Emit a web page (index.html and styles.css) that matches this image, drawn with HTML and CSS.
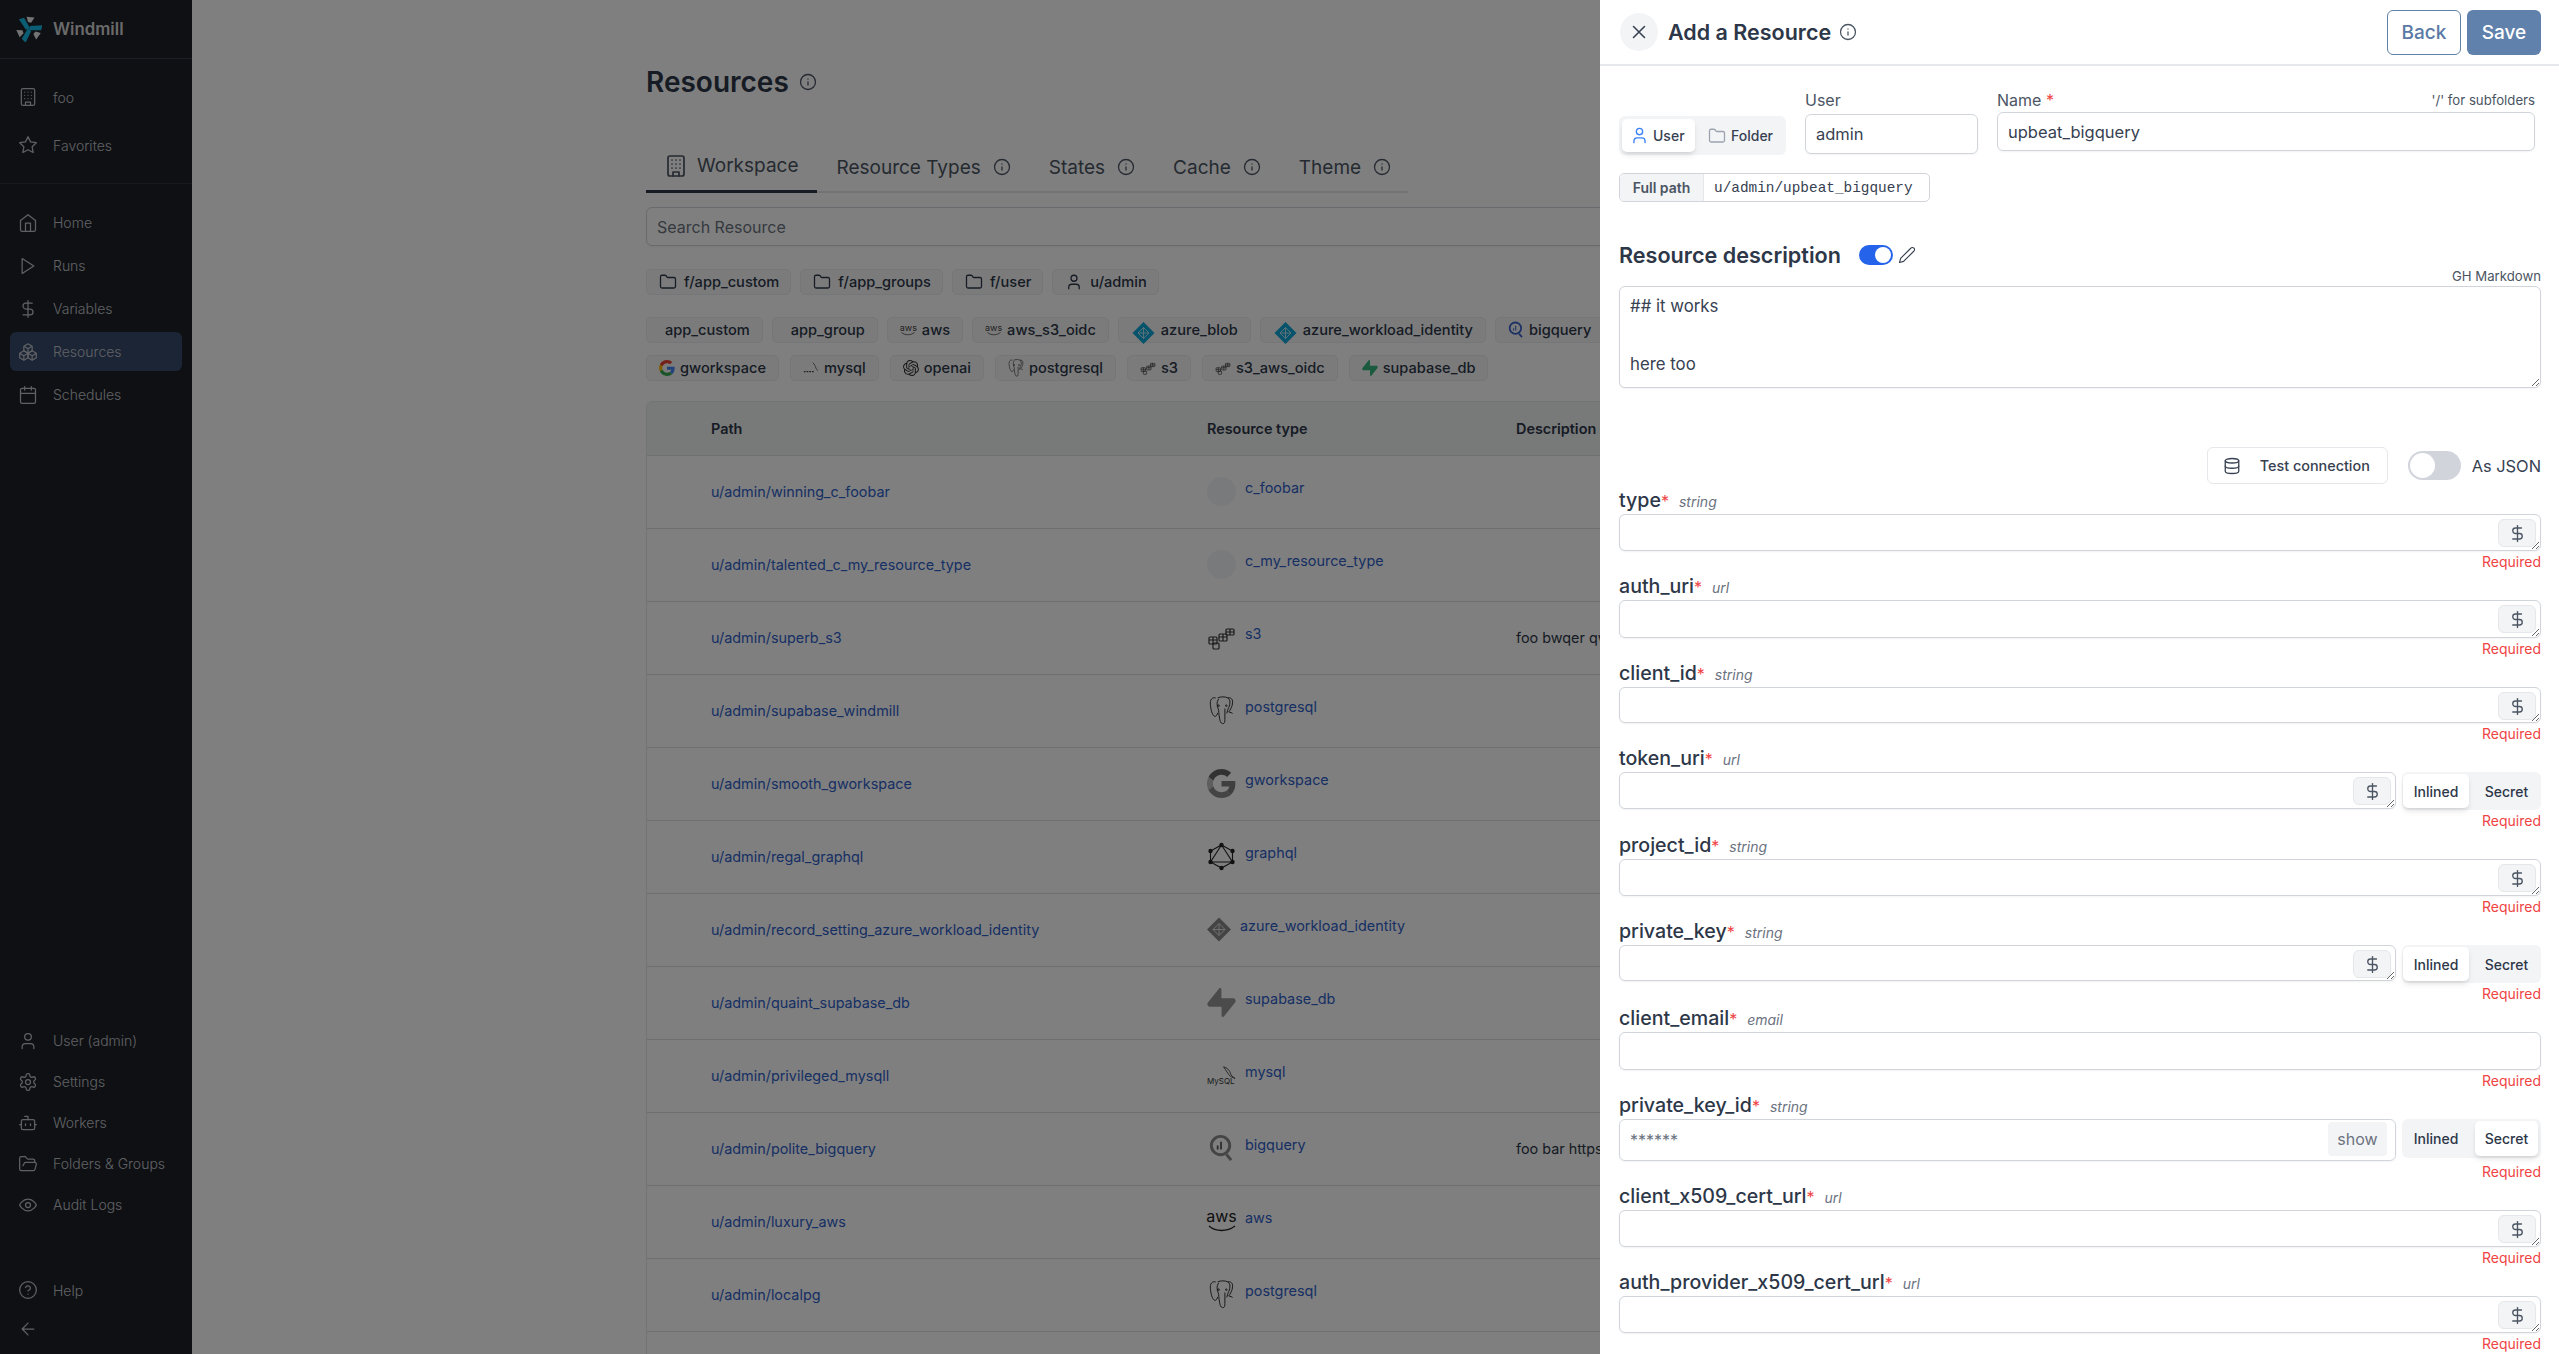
FILE: index.html
```html
<!DOCTYPE html>
<html lang="en">
<head>
<meta charset="utf-8">
<title>Windmill | Resources</title>
<link rel="stylesheet" href="styles.css">
</head>
<body>
<svg class="defs" aria-hidden="true">
  <defs>
    <symbol id="i-building" viewBox="0 0 24 24"><rect width="16" height="20" x="4" y="2" rx="2"/><path d="M9 22v-4h6v4M8 6h.01M16 6h.01M12 6h.01M12 10h.01M12 14h.01M16 10h.01M16 14h.01M8 10h.01M8 14h.01"/></symbol>
    <symbol id="i-star" viewBox="0 0 24 24"><polygon points="12 2 15.09 8.26 22 9.27 17 14.14 18.18 21.02 12 17.77 5.82 21.02 7 14.14 2 9.27 8.91 8.26 12 2"/></symbol>
    <symbol id="i-home" viewBox="0 0 24 24"><path d="m3 9 9-7 9 7v11a2 2 0 0 1-2 2H5a2 2 0 0 1-2-2z"/><polyline points="9 22 9 12 15 12 15 22"/></symbol>
    <symbol id="i-play" viewBox="0 0 24 24"><polygon points="5 3 19 12 5 21 5 3"/></symbol>
    <symbol id="i-dollar" viewBox="0 0 24 24"><line x1="12" x2="12" y1="2" y2="22"/><path d="M17 5H9.5a3.5 3.5 0 0 0 0 7h5a3.5 3.5 0 0 1 0 7H6"/></symbol>
    <symbol id="i-boxes" viewBox="0 0 24 24"><path d="M2.97 12.92A2 2 0 0 0 2 14.63v3.24a2 2 0 0 0 .97 1.71l3 1.8a2 2 0 0 0 2.06 0L12 19v-5.5l-5-3-4.03 2.42Z"/><path d="m7 16.5-4.74-2.85M7 16.5l5-3M7 16.5v5.17"/><path d="M12 13.5V19l3.97 2.38a2 2 0 0 0 2.06 0l3-1.8a2 2 0 0 0 .97-1.71v-3.24a2 2 0 0 0-.97-1.71L17 10.5l-5 3Z"/><path d="m17 16.5-5-3M17 16.5l4.74-2.85M17 16.5v5.17"/><path d="M7.97 4.42A2 2 0 0 0 7 6.13v4.37l5 3 5-3V6.13a2 2 0 0 0-.97-1.71l-3-1.8a2 2 0 0 0-2.06 0l-3 1.8Z"/><path d="M12 8 7.26 5.15M12 8l4.74-2.85M12 13.5V8"/></symbol>
    <symbol id="i-calendar" viewBox="0 0 24 24"><rect width="18" height="18" x="3" y="4" rx="2"/><line x1="16" x2="16" y1="2" y2="6"/><line x1="8" x2="8" y1="2" y2="6"/><line x1="3" x2="21" y1="10" y2="10"/></symbol>
    <symbol id="i-user" viewBox="0 0 24 24"><path d="M19 21v-2a4 4 0 0 0-4-4H9a4 4 0 0 0-4 4v2"/><circle cx="12" cy="7" r="4"/></symbol>
    <symbol id="i-settings" viewBox="0 0 24 24"><path d="M12.22 2h-.44a2 2 0 0 0-2 2v.18a2 2 0 0 1-1 1.73l-.43.25a2 2 0 0 1-2 0l-.15-.08a2 2 0 0 0-2.73.73l-.22.38a2 2 0 0 0 .73 2.73l.15.1a2 2 0 0 1 1 1.72v.51a2 2 0 0 1-1 1.74l-.15.09a2 2 0 0 0-.73 2.73l.22.38a2 2 0 0 0 2.73.73l.15-.08a2 2 0 0 1 2 0l.43.25a2 2 0 0 1 1 1.73V20a2 2 0 0 0 2 2h.44a2 2 0 0 0 2-2v-.18a2 2 0 0 1 1-1.73l.43-.25a2 2 0 0 1 2 0l.15.08a2 2 0 0 0 2.73-.73l.22-.39a2 2 0 0 0-.73-2.73l-.15-.08a2 2 0 0 1-1-1.74v-.5a2 2 0 0 1 1-1.74l.15-.09a2 2 0 0 0 .73-2.73l-.22-.38a2 2 0 0 0-2.73-.73l-.15.08a2 2 0 0 1-2 0l-.43-.25a2 2 0 0 1-1-1.73V4a2 2 0 0 0-2-2z"/><circle cx="12" cy="12" r="3"/></symbol>
    <symbol id="i-bot" viewBox="0 0 24 24"><path d="M12 8V4H8"/><rect width="16" height="12" x="4" y="8" rx="2"/><path d="M2 14h2M20 14h2M15 13v2M9 13v2"/></symbol>
    <symbol id="i-folder-open" viewBox="0 0 24 24"><path d="m6 14 1.5-2.9A2 2 0 0 1 9.24 10H20a2 2 0 0 1 1.94 2.5l-1.54 6a2 2 0 0 1-1.95 1.5H4a2 2 0 0 1-2-2V5a2 2 0 0 1 2-2h3.9a2 2 0 0 1 1.69.9l.81 1.2a2 2 0 0 0 1.67.9H18a2 2 0 0 1 2 2v2"/></symbol>
    <symbol id="i-eye" viewBox="0 0 24 24"><path d="M2 12s3-7 10-7 10 7 10 7-3 7-10 7-10-7-10-7Z"/><circle cx="12" cy="12" r="3"/></symbol>
    <symbol id="i-help" viewBox="0 0 24 24"><circle cx="12" cy="12" r="10"/><path d="M9.09 9a3 3 0 0 1 5.83 1c0 2-3 3-3 3M12 17h.01"/></symbol>
    <symbol id="i-back" viewBox="0 0 24 24"><path d="m12 19-7-7 7-7M19 12H5"/></symbol>
    <symbol id="i-x" viewBox="0 0 24 24"><path d="M18 6 6 18M6 6l12 12"/></symbol>
    <symbol id="i-info" viewBox="0 0 24 24"><circle cx="12" cy="12" r="10"/><path d="M12 16v-4M12 8h.01"/></symbol>
    <symbol id="i-folder" viewBox="0 0 24 24"><path d="M20 20a2 2 0 0 0 2-2V8a2 2 0 0 0-2-2h-7.9a2 2 0 0 1-1.69-.9L9.6 3.9A2 2 0 0 0 7.93 3H4a2 2 0 0 0-2 2v13a2 2 0 0 0 2 2Z"/></symbol>
    <symbol id="i-pen" viewBox="0 0 24 24"><path d="M17 3a2.85 2.83 0 1 1 4 4L7.5 20.5 2 22l1.5-5.5Z"/></symbol>
    <symbol id="i-db" viewBox="0 0 24 24"><ellipse cx="12" cy="5" rx="9" ry="3"/><path d="M3 5V19A9 3 0 0 0 21 19V5"/><path d="M3 12A9 3 0 0 0 21 12"/></symbol>

    <symbol id="l-g" viewBox="0 0 48 48"><path fill="#EA4335" d="M24 9.5c3.54 0 6.71 1.22 9.21 3.6l6.85-6.85C35.9 2.38 30.47 0 24 0 14.62 0 6.51 5.38 2.56 13.22l7.98 6.19C12.43 13.72 17.74 9.5 24 9.5z"/><path fill="#4285F4" d="M46.98 24.55c0-1.57-.15-3.09-.38-4.55H24v9.02h12.94c-.58 2.96-2.26 5.48-4.78 7.18l7.73 6c4.51-4.18 7.09-10.36 7.09-17.65z"/><path fill="#FBBC05" d="M10.53 28.59c-.48-1.45-.76-2.99-.76-4.59s.27-3.14.76-4.59l-7.98-6.19C.92 16.46 0 20.12 0 24c0 3.88.92 7.54 2.56 10.78l7.97-6.19z"/><path fill="#34A853" d="M24 48c6.48 0 11.93-2.13 16.05-5.81l-7.73-6c-2.15 1.45-4.92 2.3-8.32 2.3-6.26 0-11.57-4.22-13.47-9.91l-7.98 6.19C6.51 42.62 14.62 48 24 48z"/></symbol>
    <symbol id="l-azure" viewBox="0 0 24 24"><path fill="#0fa6d6" d="M12 0 24 12 12 24 0 12z"/><path fill="none" stroke="#bfeaf7" stroke-width="1" d="M12 6 18 12 12 18 6 12zM12 6v12M6 12h12"/></symbol>
    <symbol id="l-supabase" viewBox="0 0 24 24"><path fill="#35b57c" d="M11.9 1.036c-.015-.986-1.26-1.41-1.874-.637L.764 12.05C-.33 13.427.65 15.455 2.409 15.455h9.579l.113 7.51c.014.985 1.259 1.408 1.873.636l9.262-11.653c1.093-1.375.113-3.403-1.645-3.403h-9.642z"/></symbol>
    <symbol id="l-s3" viewBox="0 0 29 29"><g fill="none" stroke="#333" stroke-width="1.2"><rect x="19" y="6" width="8" height="6" rx="1"/><rect x="12" y="11" width="8" height="7" rx="1"/><rect x="2" y="14" width="8" height="7" rx="1"/><rect x="6" y="20" width="6" height="6" rx="1"/><path d="M23 6v6M16 11v7M6 14v7M2 17h8M12 14h8M19 9h8"/></g></symbol>
    <symbol id="l-pg" viewBox="0 0 26 30"><g fill="none" stroke="#2a2a2a" stroke-width="1"><path d="M7 2C3 1 1 4 1.500 9c.4 4 1.600 11 4.500 12 1.600.5 2.500-1.500 3-3.500"/><path d="M9 2c3-1.500 8-1.500 10.500 0 2.500 1.500 2.500 4.500 2 7-.6 3-2.500 5-3 9"/><path d="M19.500 2c3-.8 5 1 5 4.500 0 4-2.500 8-4 10 1.500.5 3.500 1 4 1.500"/><path d="M10 3c-2 3-2 7-.5 10 1 2 .5 6 1.500 10 .5 3 1 5 3 5.500 2 .5 2.500-1.500 2.500-4V13"/><circle cx="10" cy="10" r=".8"/><circle cx="18" cy="10" r=".8"/></g></symbol>
    <symbol id="l-graphql" viewBox="0 0 28 29"><g fill="none" stroke="#222" stroke-width="1.100"><path d="M14 3 25 9v11L14 26 3 20V9zM14 3 25 20H3z"/></g><g fill="#222"><circle cx="14" cy="3" r="2.200"/><circle cx="25" cy="9" r="2.200"/><circle cx="25" cy="20" r="2.200"/><circle cx="14" cy="26" r="2.200"/><circle cx="3" cy="20" r="2.200"/><circle cx="3" cy="9" r="2.200"/></g></symbol>
    <symbol id="l-bigquery" viewBox="0 0 26 30"><g fill="none" stroke="#3c63c8" stroke-width="3"><circle cx="12" cy="12" r="9.500"/><path d="M18 21 23 27"/></g><path stroke="#3c63c8" stroke-width="1.800" d="M9 12v4M12.500 8v8"/></symbol>
    <symbol id="l-bigquery-g" viewBox="0 0 26 30"><g fill="none" stroke="#8a8a8a" stroke-width="3"><circle cx="12" cy="12" r="9.500"/><path d="M18 21 23 27"/></g><path stroke="#555" stroke-width="1.800" d="M9 12v4M12.500 8v8"/></symbol>
    <symbol id="l-smile" viewBox="0 0 28 8"><path fill="none" stroke="#222" stroke-width="1.300" d="M1 1c7 6 18 6 26 0"/></symbol>
    <symbol id="l-dolphin" viewBox="0 0 18 16"><path fill="none" stroke="#444" stroke-width="1" d="M4 1c4 1 7 4 8 8 .5 2 2 3 5 5-3-1-5-1.500-7-4C8 7 6 4 4 1z"/></symbol>
    <symbol id="l-mysql-chip" viewBox="0 0 18 16"><path fill="none" stroke="#666" stroke-width="1" d="M11 2c2 2 3 4 3.500 6 .4 1.500 1.500 2.500 2.500 3"/><path stroke="#444" stroke-width="1.500" stroke-dasharray="2 1" d="M1 12h12"/></symbol>
    <symbol id="l-openai" viewBox="0 0 24 24"><path fill="#333" d="M22.2819 9.8211a5.9847 5.9847 0 0 0-.5157-4.9108 6.0462 6.0462 0 0 0-6.5098-2.9A6.0651 6.0651 0 0 0 4.9807 4.1818a5.9847 5.9847 0 0 0-3.9977 2.9 6.0462 6.0462 0 0 0 .7427 7.0966 5.98 5.98 0 0 0 .511 4.9107 6.051 6.051 0 0 0 6.5146 2.9001A5.9847 5.9847 0 0 0 13.2599 24a6.0557 6.0557 0 0 0 5.7718-4.2058 5.9894 5.9894 0 0 0 3.9977-2.9001 6.0557 6.0557 0 0 0-.7475-7.0729zm-9.022 12.6081a4.4755 4.4755 0 0 1-2.8764-1.0408l.1419-.0804 4.7783-2.7582a.7948.7948 0 0 0 .3927-.6813v-6.7369l2.02 1.1686a.071.071 0 0 1 .038.052v5.5826a4.504 4.504 0 0 1-4.4945 4.4944zm-9.6607-4.1254a4.4708 4.4708 0 0 1-.5346-3.0137l.142.0852 4.783 2.7582a.7712.7712 0 0 0 .7806 0l5.8428-3.3685v2.3324a.0804.0804 0 0 1-.0332.0615L9.74 19.9502a4.4992 4.4992 0 0 1-6.1408-1.6464zM2.3408 7.8956a4.485 4.485 0 0 1 2.3655-1.9728V11.6a.7664.7664 0 0 0 .3879.6765l5.8144 3.3543-2.0201 1.1685a.0757.0757 0 0 1-.071 0l-4.8303-2.7865A4.504 4.504 0 0 1 2.3408 7.872zm16.5963 3.8558L13.1038 8.364 15.1192 7.2a.0757.0757 0 0 1 .071 0l4.8303 2.7913a4.4944 4.4944 0 0 1-.6765 8.1042v-5.6772a.79.79 0 0 0-.407-.667zm2.0107-3.0231l-.142-.0852-4.7735-2.7818a.7759.7759 0 0 0-.7854 0L9.409 9.2297V6.8974a.0662.0662 0 0 1 .0284-.0615l4.8303-2.7866a4.4992 4.4992 0 0 1 6.6802 4.66zM8.3065 12.863l-2.02-1.1638a.0804.0804 0 0 1-.038-.0567V6.0742a4.4992 4.4992 0 0 1 7.3757-3.4537l-.142.0805L8.704 5.459a.7948.7948 0 0 0-.3927.6813zm1.0976-2.3654l2.602-1.4998 2.6069 1.4998v2.9994l-2.5974 1.5-2.6067-1.4998Z"/></symbol>
    <symbol id="l-windmill" viewBox="0 0 32 32"><path fill="#17bbe8" d="M3.600 4 10 2.300 17.300 15.100 12.200 16.900z"/><path fill="#17bbe8" d="M3.600 4 10 2.300 17.300 15.100 12.200 16.900z" transform="rotate(120 16 16)"/><path fill="#17bbe8" d="M3.600 4 10 2.300 17.300 15.100 12.200 16.900z" transform="rotate(240 16 16)"/><path fill="#e8e8e8" d="M13 1 22.800 1.900 18.600 8.300 14.800 7.500z"/><path fill="#e8e8e8" d="M13 1 22.800 1.900 18.600 8.300 14.800 7.500z" transform="rotate(120 16 16)"/><path fill="#e8e8e8" d="M13 1 22.800 1.900 18.600 8.300 14.800 7.500z" transform="rotate(240 16 16)"/></symbol>
  </defs>
</svg>

<div class="app">
  <aside class="sidebar">
    <div class="brand"><svg class="brand-logo"><use href="#l-windmill"/></svg><span>Windmill</span></div>
    <nav class="nav nav-top">
      <a class="nav-item tall"><svg class="ico"><use href="#i-building"/></svg>foo</a>
      <a class="nav-item tall"><svg class="ico"><use href="#i-star"/></svg>Favorites</a>
    </nav>
    <nav class="nav nav-main">
      <a class="nav-item"><svg class="ico"><use href="#i-home"/></svg>Home</a>
      <a class="nav-item"><svg class="ico"><use href="#i-play"/></svg>Runs</a>
      <a class="nav-item"><svg class="ico"><use href="#i-dollar"/></svg>Variables</a>
      <a class="nav-item active"><svg class="ico"><use href="#i-boxes"/></svg>Resources</a>
      <a class="nav-item"><svg class="ico"><use href="#i-calendar"/></svg>Schedules</a>
    </nav>
    <nav class="nav nav-bottom">
      <a class="nav-item"><svg class="ico"><use href="#i-user"/></svg>User (admin)</a>
      <a class="nav-item"><svg class="ico"><use href="#i-settings"/></svg>Settings</a>
      <a class="nav-item"><svg class="ico"><use href="#i-bot"/></svg>Workers</a>
      <a class="nav-item"><svg class="ico"><use href="#i-folder-open"/></svg>Folders &amp; Groups</a>
      <a class="nav-item"><svg class="ico"><use href="#i-eye"/></svg>Audit Logs</a>
    </nav>
    <nav class="nav nav-foot">
      <a class="nav-item short"><svg class="ico"><use href="#i-help"/></svg>Help</a>
      <a class="nav-item short"><svg class="ico"><use href="#i-back"/></svg></a>
    </nav>
  </aside>

  <main class="main">
    <h1 class="page-title">Resources <svg class="ico info-title"><use href="#i-info"/></svg></h1>
    <div class="tabs">
      <div class="tab current"><svg class="ico tab-ico"><use href="#i-building"/></svg>Workspace</div>
      <div class="tab">Resource Types<svg class="ico tab-info"><use href="#i-info"/></svg></div>
      <div class="tab">States<svg class="ico tab-info"><use href="#i-info"/></svg></div>
      <div class="tab">Cache<svg class="ico tab-info"><use href="#i-info"/></svg></div>
      <div class="tab">Theme<svg class="ico tab-info"><use href="#i-info"/></svg></div>
    </div>
    <div class="search">Search Resource</div>

    <div class="chips chips-owner">
      <span class="chip"><svg class="ico"><use href="#i-folder"/></svg>f/app_custom</span>
      <span class="chip"><svg class="ico"><use href="#i-folder"/></svg>f/app_groups</span>
      <span class="chip"><svg class="ico"><use href="#i-folder"/></svg>f/user</span>
      <span class="chip"><svg class="ico"><use href="#i-user"/></svg>u/admin</span>
    </div>
    <div class="chips chips-a">
      <span class="chip plain">app_custom</span>
      <span class="chip plain">app_group</span>
      <span class="chip"><span class="aws-mini"><span>aws</span><svg><use href="#l-smile"/></svg></span>aws</span>
      <span class="chip"><span class="aws-mini"><span>aws</span><svg><use href="#l-smile"/></svg></span>aws_s3_oidc</span>
      <span class="chip"><svg class="logo-azure-chip"><use href="#l-azure"/></svg>azure_blob</span>
      <span class="chip"><svg class="logo-azure-chip"><use href="#l-azure"/></svg>azure_workload_identity</span>
      <span class="chip"><svg class="chip-logo"><use href="#l-bigquery"/></svg>bigquery</span>
    </div>
    <div class="chips chips-b">
      <span class="chip"><svg class="chip-logo"><use href="#l-g"/></svg>gworkspace</span>
      <span class="chip"><svg class="chip-logo"><use href="#l-mysql-chip"/></svg>mysql</span>
      <span class="chip"><svg class="chip-logo"><use href="#l-openai"/></svg>openai</span>
      <span class="chip"><svg class="chip-logo"><use href="#l-pg"/></svg>postgresql</span>
      <span class="chip"><svg class="chip-logo"><use href="#l-s3"/></svg>s3</span>
      <span class="chip"><svg class="chip-logo"><use href="#l-s3"/></svg>s3_aws_oidc</span>
      <span class="chip"><svg class="chip-logo"><use href="#l-supabase"/></svg>supabase_db</span>
    </div>

    <div class="table">
      <div class="row head"><div>Path</div><div>Resource type</div><div>Description</div></div>
      <div class="row"><a class="path">u/admin/winning_c_foobar</a><div class="rtype"><span class="logo blank"></span><a>c_foobar</a></div><div></div></div>
      <div class="row"><a class="path">u/admin/talented_c_my_resource_type</a><div class="rtype"><span class="logo blank"></span><a>c_my_resource_type</a></div><div></div></div>
      <div class="row"><a class="path">u/admin/superb_s3</a><div class="rtype"><svg class="logo"><use href="#l-s3"/></svg><a>s3</a></div><div class="desc">foo bwqer qwer qwe</div></div>
      <div class="row"><a class="path">u/admin/supabase_windmill</a><div class="rtype"><svg class="logo"><use href="#l-pg"/></svg><a>postgresql</a></div><div></div></div>
      <div class="row"><a class="path">u/admin/smooth_gworkspace</a><div class="rtype"><svg class="logo gray"><use href="#l-g"/></svg><a>gworkspace</a></div><div></div></div>
      <div class="row"><a class="path">u/admin/regal_graphql</a><div class="rtype"><svg class="logo"><use href="#l-graphql"/></svg><a>graphql</a></div><div></div></div>
      <div class="row"><a class="path">u/admin/record_setting_azure_workload_identity</a><div class="rtype"><svg class="logo narrow gray"><use href="#l-azure"/></svg><a>azure_workload_identity</a></div><div></div></div>
      <div class="row"><a class="path">u/admin/quaint_supabase_db</a><div class="rtype"><svg class="logo gray"><use href="#l-supabase"/></svg><a>supabase_db</a></div><div></div></div>
      <div class="row"><a class="path">u/admin/privileged_mysqll</a><div class="rtype"><span class="logo mysql-logo"><svg class="mysql-fin"><use href="#l-dolphin"/></svg><span class="mysql-word">MySQL</span></span><a>mysql</a></div><div></div></div>
      <div class="row"><a class="path">u/admin/polite_bigquery</a><div class="rtype"><svg class="logo"><use href="#l-bigquery-g"/></svg><a>bigquery</a></div><div class="desc">foo bar https://foo.bar</div></div>
      <div class="row"><a class="path">u/admin/luxury_aws</a><div class="rtype"><span class="logo aws-logo"><span class="aws-word">aws</span><svg class="aws-smile"><use href="#l-smile"/></svg></span><a>aws</a></div><div></div></div>
      <div class="row"><a class="path">u/admin/localpg</a><div class="rtype"><svg class="logo"><use href="#l-pg"/></svg><a>postgresql</a></div><div></div></div>
      <div class="row"></div>
    </div>
  </main>
</div>

<div class="overlay"></div>

<section class="drawer">
  <header class="drawer-head">
    <button class="close"><svg class="ico"><use href="#i-x"/></svg></button>
    <h2>Add a Resource</h2>
    <svg class="ico head-info"><use href="#i-info"/></svg>
    <div class="head-actions"><button class="btn-back">Back</button><button class="btn-save">Save</button></div>
  </header>
  <div class="drawer-body">
    <div class="path-row">
      <div class="seg seg-owner">
        <span class="seg-opt on"><svg class="ico user-blue"><use href="#i-user"/></svg>User</span>
        <span class="seg-opt"><svg class="ico folder-gray"><use href="#i-folder"/></svg>Folder</span>
      </div>
      <div class="col-user">
        <div class="col-label">User</div>
        <div class="text-box">admin</div>
      </div>
      <div class="col-name">
        <div class="col-label spread"><span>Name <b class="star">*</b></span><small>'/' for subfolders</small></div>
        <div class="text-box name-box">upbeat_bigquery</div>
      </div>
    </div>
    <div class="full-path"><span class="fp-label">Full path</span><code>u/admin/upbeat_bigquery</code></div>

    <div class="desc-head"><h3>Resource description</h3><span class="switch on"></span><svg class="ico pen"><use href="#i-pen"/></svg></div>
    <div class="md-note">GH Markdown</div>
    <textarea class="desc-area">## it works

here too</textarea>

    <div class="actions">
      <button class="test"><svg class="ico"><use href="#i-db"/></svg>Test connection</button>
      <span class="switch"></span>
      <span class="as-json">As JSON</span>
    </div>

    <div class="field">
      <div class="flabel">type<b class="star">*</b><i>string</i></div>
      <div class="fbody"><div class="fwrap"><textarea class="h37"></textarea><span class="dollar"><svg class="ico"><use href="#i-dollar"/></svg></span></div></div>
      <div class="req">Required</div>
    </div>
    <div class="field">
      <div class="flabel">auth_uri<b class="star">*</b><i>url</i></div>
      <div class="fbody"><div class="fwrap"><textarea class="h38"></textarea><span class="dollar"><svg class="ico"><use href="#i-dollar"/></svg></span></div></div>
      <div class="req">Required</div>
    </div>
    <div class="field">
      <div class="flabel">client_id<b class="star">*</b><i>string</i></div>
      <div class="fbody"><div class="fwrap"><textarea class="h36"></textarea><span class="dollar"><svg class="ico"><use href="#i-dollar"/></svg></span></div></div>
      <div class="req">Required</div>
    </div>
    <div class="field">
      <div class="flabel">token_uri<b class="star">*</b><i>url</i></div>
      <div class="fbody"><div class="fwrap"><textarea class="h37"></textarea><span class="dollar"><svg class="ico"><use href="#i-dollar"/></svg></span></div>
        <div class="seg seg-secret"><span class="seg-opt on">Inlined</span><span class="seg-opt">Secret</span></div></div>
      <div class="req">Required</div>
    </div>
    <div class="field">
      <div class="flabel">project_id<b class="star">*</b><i>string</i></div>
      <div class="fbody"><div class="fwrap"><textarea class="h37"></textarea><span class="dollar"><svg class="ico"><use href="#i-dollar"/></svg></span></div></div>
      <div class="req">Required</div>
    </div>
    <div class="field">
      <div class="flabel">private_key<b class="star">*</b><i>string</i></div>
      <div class="fbody"><div class="fwrap"><textarea class="h36"></textarea><span class="dollar"><svg class="ico"><use href="#i-dollar"/></svg></span></div>
        <div class="seg seg-secret"><span class="seg-opt on">Inlined</span><span class="seg-opt">Secret</span></div></div>
      <div class="req">Required</div>
    </div>
    <div class="field">
      <div class="flabel">client_email<b class="star">*</b><i>email</i></div>
      <div class="fbody"><div class="fwrap"><input class="h38" type="text"></div></div>
      <div class="req">Required</div>
    </div>
    <div class="field">
      <div class="flabel">private_key_id<b class="star">*</b><i>string</i></div>
      <div class="fbody"><div class="fwrap masked h42"><span class="stars">******</span><span class="show">show</span></div>
        <div class="seg seg-secret tall-seg"><span class="seg-opt">Inlined</span><span class="seg-opt on">Secret</span></div></div>
      <div class="req">Required</div>
    </div>
    <div class="field">
      <div class="flabel">client_x509_cert_url<b class="star">*</b><i>url</i></div>
      <div class="fbody"><div class="fwrap"><textarea class="h37"></textarea><span class="dollar"><svg class="ico"><use href="#i-dollar"/></svg></span></div></div>
      <div class="req">Required</div>
    </div>
    <div class="field">
      <div class="flabel">auth_provider_x509_cert_url<b class="star">*</b><i>url</i></div>
      <div class="fbody"><div class="fwrap"><textarea class="h37"></textarea><span class="dollar"><svg class="ico"><use href="#i-dollar"/></svg></span></div></div>
      <div class="req">Required</div>
    </div>
  </div>
</section>
</body>
</html>
```

FILE: styles.css
```css
* { box-sizing: border-box; }
html, body { margin: 0; height: 100%; }
body { font-family: Inter, "Liberation Sans", sans-serif; color: #2d3748; background: #fff; overflow: hidden; }
.defs { position: absolute; width: 0; height: 0; }
.ico { width: 18px; height: 18px; flex: none; fill: none; stroke: currentColor; stroke-width: 1.7; stroke-linecap: round; stroke-linejoin: round; }

.app { display: flex; height: 100vh; }
.sidebar { width: 192px; flex: none; height: 100vh; overflow: hidden; background: #1e2129; color: #c0c3c8; display: flex; flex-direction: column; font-size: 14px; font-weight: 300; }
.brand { height: 59px; flex: none; border-bottom: 1px solid #3a3c4a; display: flex; align-items: center; gap: 11px; padding-left: 16px; font-size: 16.8px; font-weight: 600; color: #d5d5d5; }
.brand-logo { width: 26px; height: 26px; flex: none; }
.nav { display: flex; flex-direction: column; padding: 0 10px; gap: 4px; }
.nav-top { padding-top: 14px; padding-bottom: 14px; gap: 0; border-bottom: 1px solid #32343f; }
.nav-main { padding-top: 19px; }
.nav-bottom { margin-top: auto; }
.nav-foot { margin-top: 52px; padding-bottom: 10px; gap: 9px; }
.nav-item { display: flex; align-items: center; gap: 15px; height: 37px; padding-left: 8px; border-radius: 6px; white-space: nowrap; }
.nav-item .ico { width: 20px; height: 20px; stroke-width: 1.5; }
.nav-main .nav-item { height: 39px; }
.nav-item.tall { height: 48px; }
.nav-item.short { height: 30px; }
.nav-item.active { background: #364a6c; }

.main { flex: 1; min-width: 0; padding-left: 454px; padding-right: 454px; }
.page-title { margin: 62px 0 0; height: 40px; display: flex; align-items: center; gap: 10px; font-size: 28px; font-weight: 600; color: #2d3748; }
.info-title { color: #4b5563; }
.tabs { width: 762px; height: 50px; margin-top: 41px; display: flex; border-bottom: 2px solid #e5e7eb; color: #4b5563; font-size: 19px; }
.tab { height: 50px; display: flex; align-items: center; padding: 0 19px 2px; white-space: nowrap; }
.tab.current { padding: 0 19px 2px 18px; gap: 9px; border-bottom: 3px solid #2d3748; }
.tab-ico { width: 24px; height: 24px; }
.tab-info { margin-left: 12px; }
.search { margin-top: 14px; height: 39px; border: 1px solid #d1d5db; border-radius: 6px; box-shadow: 0 1px 2px rgba(0,0,0,.05); display: flex; align-items: center; padding-left: 10px; font-size: 16px; color: #6b7280; }
.chips { display: flex; gap: 9px; white-space: nowrap; }
.chips-owner { margin-top: 23px; }
.chips-a { margin-top: 22px; }
.chips-b { margin-top: 12px; gap: 11px; }
.chip { height: 26px; display: inline-flex; align-items: center; gap: 5px; padding: 0 12px; border: 1px solid #eaecef; background: #f6f7f8; border-radius: 5px; font-size: 14.6px; font-weight: 500; color: #2d3748; flex: none; }
.chips-owner .chip { gap: 7px; padding-right: 11px; }
.chip.plain { padding-left: 18px; }
.chip-logo { width: 16px; height: 18px; flex: none; }
.logo-azure-chip { width: 25px; height: 22px; flex: none; margin-top: 6px; }
.aws-mini { display: inline-flex; flex-direction: column; align-items: center; width: 17px; line-height: 8px; font-size: 9px; font-weight: 400; color: #444; }
.aws-mini svg { width: 16px; height: 4px; }

.table { margin-top: 20px; border: 1px solid #e5e7eb; border-right: 0; border-bottom: 0; border-radius: 6px 0 0 0; }
.row { display: grid; grid-template-columns: 496px 309px 1fr; padding: 0 0 2px 64px; height: 73px; align-items: center; border-bottom: 1px solid #dcdee2; font-size: 14.4px; }
.row.head { height: 54px; padding-bottom: 0; background: #f1f2f3; font-weight: 600; color: #2d3748; }
.path, .rtype a { color: #2f60c8; white-space: nowrap; }
.rtype { display: flex; align-items: flex-start; gap: 9px; align-self: start; padding-top: 21px; }
.rtype a { line-height: 22px; }
.logo { width: 29px; height: 29px; flex: none; }
.logo.gray { filter: grayscale(1); }
.logo.narrow { width: 24px; }
.logo.blank { background: #f3f4f6; border-radius: 50%; }
.desc { white-space: nowrap; color: #2d3748; }
.mysql-logo { position: relative; display: block; }
.mysql-fin { position: absolute; right: 0; top: 2px; width: 16px; height: 20px; }
.mysql-word { position: absolute; left: 0; bottom: 4px; font-size: 8px; color: #333; }
.aws-logo { display: flex; flex-direction: column; align-items: center; line-height: 1; }
.aws-word { font-size: 16px; color: #222; line-height: 18px; }
.aws-smile { width: 28px; height: 8px; }

.overlay { position: fixed; inset: 0; background: rgba(0,0,0,.5); }

.drawer { position: fixed; top: 0; right: 0; bottom: 0; width: 959px; background: #fff; overflow: hidden; color: #2d3748; }
.drawer-head { height: 66px; border-bottom: 2px solid #e5e7eb; display: flex; align-items: center; padding: 0 18px 0 20px; }
.close { width: 38px; height: 38px; border-radius: 50%; background: #f3f4f6; border: 0; padding: 0; color: #374151; display: flex; align-items: center; justify-content: center; }
.close .ico { width: 22px; height: 22px; }
.drawer-head h2 { margin: 0 0 0 10px; font-size: 21.5px; font-weight: 600; }
.head-info { margin-left: 8px; color: #4b5563; }
.head-actions { margin-left: auto; display: flex; gap: 6px; }
.btn-back, .btn-save { width: 74px; height: 45px; border-radius: 6px; font: 500 19px Inter, sans-serif; }
.btn-back { background: #fff; color: #5a7aa5; border: 1px solid #5f81ab; }
.btn-save { background: #5f81ab; color: #fff; border: 0; }

.drawer-body { padding: 24px 18px 0 19px; }
.path-row { display: flex; align-items: flex-start; gap: 19px; }
.seg { display: flex; background: #f3f4f6; border-radius: 6px; font-size: 14px; font-weight: 500; }
.seg-opt { display: flex; align-items: center; color: #374151; border-radius: 5px; }
.seg-opt.on { background: #fff; box-shadow: 0 4px 6px -1px rgba(0,0,0,.1), 0 2px 4px -2px rgba(0,0,0,.1); }
.seg-owner { width: 167px; height: 39px; margin-top: 26px; padding: 3px 3px; flex: none; }
.seg-owner .seg-opt { height: 33px; gap: 4px; padding-left: 8px; width: 73px; }
.seg-owner .seg-opt + .seg-opt { padding-left: 13px; gap: 5px; width: 88px; }
.user-blue { color: #3b82f6; width: 19px; height: 19px; }
.folder-gray { color: #9ca3af; }
.col-user { width: 173px; flex: none; }
.col-name { flex: 1; margin-right: 6px; }
.col-label { height: 20px; line-height: 20px; font-size: 16px; color: #4b5563; }
.col-label.spread { display: flex; justify-content: space-between; }
.col-label small { font-size: 13.2px; }
.star { color: #ef4444; font-weight: 400; }
.text-box { height: 40px; margin-top: 4px; border: 1px solid #d1d5db; border-radius: 6px; box-shadow: 0 1px 2px rgba(0,0,0,.05); display: flex; align-items: center; padding-left: 10px; font-size: 16.5px; color: #374151; }
.name-box { margin-top: 2px; height: 39px; }
.full-path { width: 311px; height: 29px; margin-top: 18px; display: flex; border: 1px solid #d1d5db; border-radius: 5px; font-size: 14px; overflow: hidden; }
.fp-label { width: 84px; flex: none; background: #f3f4f6; font-weight: 600; color: #4b5563; display: flex; align-items: center; justify-content: center; border-right: 1px solid #e5e7eb; }
.full-path code { font-family: "Liberation Mono", monospace; font-size: 14.4px; color: #374151; display: flex; align-items: center; padding-left: 10px; white-space: nowrap; }
.desc-head { margin-top: 43px; height: 20px; display: flex; align-items: center; }
.desc-head h3 { margin: 0; font-size: 21.6px; font-weight: 600; color: #2d3748; }
.switch { position: relative; width: 34px; height: 20px; border-radius: 10px; background: #2563eb; flex: none; display: block; margin-left: 18px; }
.switch::after { content: ""; position: absolute; right: 2px; top: 2px; width: 16px; height: 16px; border-radius: 50%; background: #fff; }
.pen { margin-left: 5px; color: #374151; stroke-width: 1.5; }
.md-note { margin-top: 3px; height: 16px; line-height: 16px; text-align: right; font-size: 13.2px; color: #4b5563; }
textarea, input { display: block; width: 100%; border: 1px solid #d1d5db; border-radius: 6px; box-shadow: 0 1px 2px rgba(0,0,0,.05); background: #fff; outline: 0; margin: 0; }
.desc-area { margin-top: 2px; height: 102px; padding: 5px 10px; font: 400 16.8px/29px Inter, sans-serif; color: #374151; }
.actions { margin-top: 59px; height: 37px; display: flex; align-items: center; justify-content: flex-end; }
.test { width: 181px; height: 37px; background: #fff; border: 1px solid #e5e7eb; border-radius: 6px; display: flex; align-items: center; padding: 0 0 0 15px; gap: 19px; font: 500 14.4px Inter, sans-serif; color: #374151; }
.actions .switch { width: 53px; height: 29px; border-radius: 15px; background: #d1d5db; margin-left: 20px; }
.actions .switch::after { left: 2px; right: auto; top: 2px; width: 25px; height: 25px; }
.as-json { margin-left: 11px; font-size: 16.4px; color: #374151; }

.field { margin-bottom: 6px; }
.actions + .field { margin-top: 6px; }
.flabel { height: 20px; line-height: 20px; margin-bottom: 4px; font-size: 19.6px; font-weight: 500; color: #2d3748; white-space: nowrap; }
.flabel i { margin-left: 10px; font-size: 14px; font-weight: 400; color: #6b7280; }
.flabel .star { font-size: 16px; }
.fbody { display: flex; gap: 6px; align-items: flex-start; }
.fwrap { position: relative; flex: 1; min-width: 0; }
.h36 { height: 36px; }
.h37 { height: 37px; }
.h38 { height: 38px; }
.h42 { height: 42px; }
.dollar { position: absolute; top: 5px; right: 5px; width: 38px; height: 28px; border: 1px solid #e5e7eb; background: #f3f4f6; border-radius: 6px; color: #4b5563; display: flex; align-items: center; justify-content: center; }
.dollar .ico { width: 19px; height: 19px; }
.seg-secret { width: 139px; height: 38px; flex: none; padding: 2px 3px 2px 1px; align-items: stretch; justify-content: space-between; }
.seg-secret .seg-opt { color: #2d3748; justify-content: center; width: 66px; }
.seg-secret .seg-opt:last-child { width: 63px; }
.tall-seg { height: 39px; }
.masked { border: 1px solid #d1d5db; border-radius: 6px; box-shadow: 0 1px 2px rgba(0,0,0,.05); display: flex; align-items: center; justify-content: space-between; padding-left: 10px; padding-right: 8px; }
.stars { font-size: 16px; color: #6b7280; }
.show { width: 59px; height: 34px; margin-top: -3px; background: #f3f4f6; border-radius: 4px; display: flex; align-items: center; justify-content: center; font-size: 16px; color: #6b7280; }
.req { margin-top: 3px; height: 16px; line-height: 16px; text-align: right; font-size: 14px; color: #ef4444; }
```
